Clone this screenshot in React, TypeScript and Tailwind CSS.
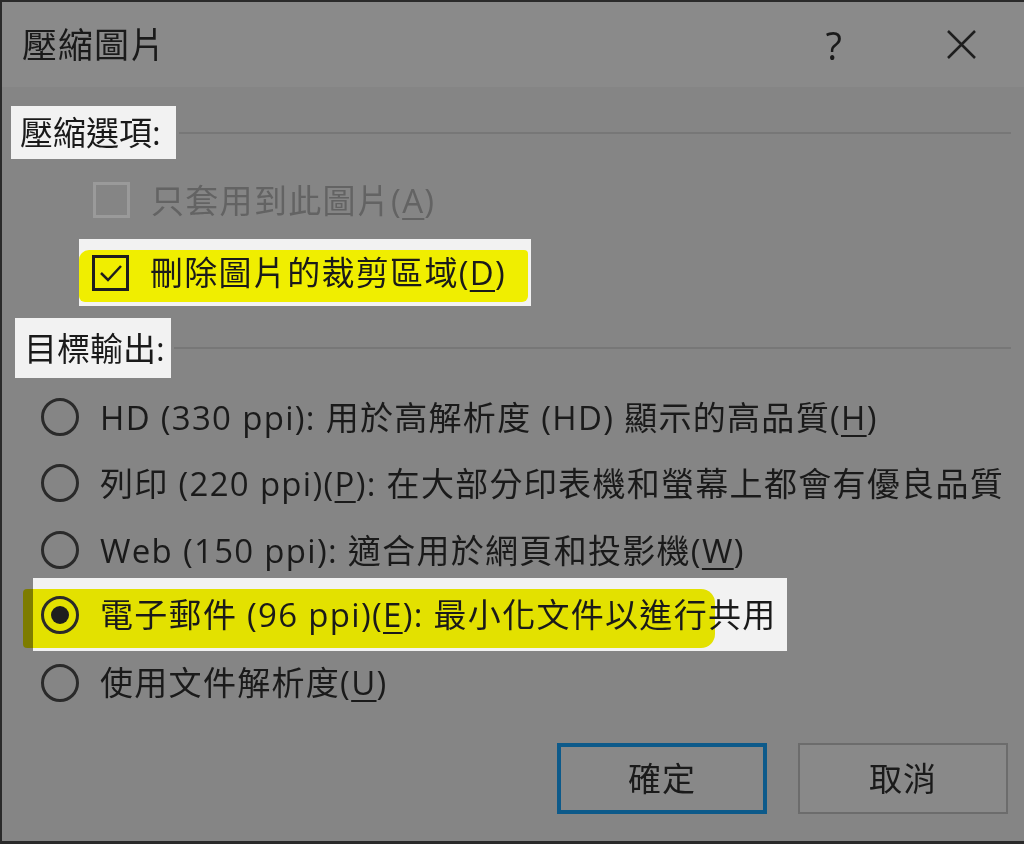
import type { ReactNode } from 'react';

function Key({ k }: { k: string }) {
  return (
    <>
      (<span className="underline decoration-2 underline-offset-[5px]">{k}</span>)
    </>
  );
}

function Radio({ checked }: { checked?: boolean }) {
  return (
    <div className="w-[38px] h-[38px] rounded-full border-[3px] border-[#2a2a2a] flex items-center justify-center shrink-0">
      {checked && <div className="w-[18px] h-[18px] rounded-full bg-[#1e1e1e]" />}
    </div>
  );
}

function Heading({ children, width, left }: { children: ReactNode; width: string; left: string }) {
  return (
    <div className="flex items-center h-full">
      <div className={`${left} ${width} h-full bg-[#f2f2f2] flex items-center pl-[9px] text-[33px] leading-none shrink-0`}>
        {children}
      </div>
      <div className="flex-1 h-[2px] bg-[#777777] ml-[3px] mr-[13px]" />
    </div>
  );
}

export default function App() {
  return (
    <div className="w-[1024px] h-[844px] bg-[#858585] border-t-2 border-l-2 border-b-[3px] border-[#2a2a2a] flex flex-col overflow-hidden text-[#1a1a1a] font-['Open_Sans','Noto_Sans_CJK_TC',sans-serif]">
      {/* Title bar */}
      <div className="h-[85px] bg-[#8a8a8a] flex items-center pl-[20px] pr-[47px] shrink-0">
        <div className="text-[35px] leading-none tracking-[1px]">壓縮圖片</div>
        <div className="ml-auto text-[38px] leading-none">?</div>
        <svg width="31" height="31" viewBox="0 0 31 31" className="ml-[104px]">
          <path d="M2 2L29 29M29 2L2 29" stroke="#1e1e1e" strokeWidth="2.5" />
        </svg>
      </div>

      {/* 壓縮選項 */}
      <div className="mt-[19px] h-[53px]">
        <Heading left="ml-[9px]" width="w-[165px]">壓縮選項:</Heading>
      </div>

      <div className="mt-[8px] h-[66px] flex items-center pl-[91px]">
        <div className="w-[37px] h-[36px] border-[3px] border-[#9a9a9a] shrink-0" />
        <div className="ml-[21px] text-[33px] leading-none tracking-[1.3px] text-[#636363]">
          只套用到此圖片<Key k="A" />
        </div>
      </div>

      <div className="mt-[6px] h-[67px] ml-[77px] w-[452px] bg-[#f2f2f2] relative flex items-center pl-[13px]">
        <div className="absolute left-0 right-[3px] top-[11px] h-[52px] bg-[#f0ee00] rounded-tl-[10px] rounded-tr-[4px] rounded-b-[6px]" />
        <div className="relative w-[37px] h-[36px] border-[3px] border-[#1e1e1e] shrink-0 flex items-center justify-center">
          <svg width="26" height="22" viewBox="0 0 26 22">
            <path d="M3 11L10 18L23 4" fill="none" stroke="#1e1e1e" strokeWidth="2.5" />
          </svg>
        </div>
        <div className="relative ml-[21px] text-[33px] leading-none tracking-[1.3px] whitespace-nowrap">
          刪除圖片的裁剪區域<Key k="D" />
        </div>
      </div>

      {/* 目標輸出 */}
      <div className="mt-[12px] h-[60px]">
        <Heading left="ml-[13px]" width="w-[156px]">目標輸出:</Heading>
      </div>

      <div className="mt-[6px] h-[66px] flex items-center pl-[39px]">
        <Radio />
        <div className="ml-[21px] text-[33px] leading-none tracking-[1.3px] whitespace-nowrap">
          HD (330 ppi): 用於高解析度 (HD) 顯示的高品質<Key k="H" />
        </div>
      </div>
      <div className="h-[66px] flex items-center pl-[39px]">
        <Radio />
        <div className="ml-[21px] text-[33px] leading-none tracking-[1.3px] whitespace-nowrap">
          列印 (220 ppi)<Key k="P" />: 在大部分印表機和螢幕上都會有優良品質
        </div>
      </div>
      <div className="h-[62px] pt-[6px] flex items-center pl-[39px]">
        <Radio />
        <div className="ml-[21px] text-[33px] leading-none tracking-[1.3px] whitespace-nowrap">
          Web (150 ppi): 適合用於網頁和投影機<Key k="W" />
        </div>
      </div>
      <div className="h-[73px] ml-[31px] w-[754px] bg-[#f2f2f2] relative flex items-center pl-[8px]">
        <div className="absolute -left-[10px] w-[692px] top-[11px] bottom-[3px] bg-[#f0ee00] mix-blend-multiply rounded-l-[4px] rounded-r-[14px]" />
        <div className="relative">
          <Radio checked />
        </div>
        <div className="relative ml-[21px] text-[33px] leading-none tracking-[1.3px] whitespace-nowrap">
          電子郵件 (96 ppi)<Key k="E" />: 最小化文件以進行共用
        </div>
      </div>
      <div className="h-[63px] flex items-center pl-[39px]">
        <Radio />
        <div className="ml-[21px] text-[33px] leading-none tracking-[1.3px] whitespace-nowrap">
          使用文件解析度<Key k="U" />
        </div>
      </div>

      {/* Buttons */}
      <div className="mt-[29px] h-[71px] flex justify-end gap-[31px] pr-[16px]">
        <button className="w-[210px] h-full border-[4px] border-[#0d5a8a] bg-[#888888] text-[33px] leading-none tracking-[1px]">
          確定
        </button>
        <button className="w-[210px] h-full border-2 border-[#6c6c6c] bg-[#898989] text-[33px] leading-none tracking-[1px]">
          取消
        </button>
      </div>
    </div>
  );
}
